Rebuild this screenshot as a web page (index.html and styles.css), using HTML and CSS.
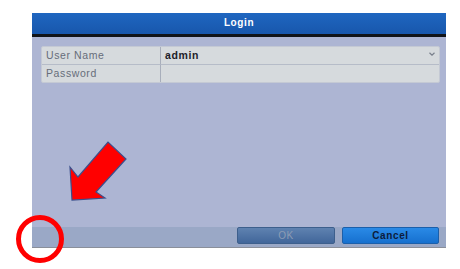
FILE: index.html
```html
<!DOCTYPE html>
<html lang="en">
<head>
    <meta charset="UTF-8">
    <title>Login</title>
    <link rel="stylesheet" href="styles.css">
</head>
<body>
    <div class="dialog">
        <div class="dialog-title">Login</div>
        <div class="dialog-body">
            <div class="login-table">
                <div class="cell label">User Name</div>
                <div class="cell value">admin
                    <svg class="caret" width="6" height="4" viewBox="0 0 6 4">
                        <path d="M0.5 0.8 L3 3.2 L5.5 0.8" fill="none" stroke="#7a808c" stroke-width="1.2"/>
                    </svg>
                </div>
                <div class="cell label">Password</div>
                <div class="cell value"></div>
            </div>
        </div>
        <div class="dialog-footer">
            <button class="btn btn-ok">OK</button>
            <button class="btn btn-cancel">Cancel</button>
        </div>
    </div>

    <!-- annotation overlay -->
    <svg class="annotation" width="460" height="269" viewBox="0 0 460 269">
        <polygon points="72,200 70,167 78,177 108,142 126,159 96,192 105,198"
                 fill="#ff0000" stroke="#3b4f8c" stroke-width="1.2" stroke-linejoin="miter"/>
        <circle cx="40" cy="239" r="21.5" fill="none" stroke="#ff0000" stroke-width="5"/>
    </svg>
</body>
</html>
```

FILE: styles.css
```css
* {
    margin: 0;
    padding: 0;
    box-sizing: border-box;
}

body {
    font-family: 'Liberation Sans', Arial, sans-serif;
    background: #ffffff;
    width: 460px;
    height: 269px;
    overflow: hidden;
    position: relative;
}

/* Dialog */
.dialog {
    margin: 13px 0 0 32px;
    width: 414px;
    height: 235px;
    background: #adb5d3;
    display: flex;
    flex-direction: column;
    border-bottom: 1px solid #8a8f9a;
}

.dialog-title {
    height: 24px;
    background: linear-gradient(#1f66c0, #1857ac);
    border-bottom: 3px solid #111418;
    color: #ffffff;
    font-size: 10px;
    font-weight: bold;
    letter-spacing: 0.6px;
    text-align: center;
    line-height: 20px;
}

.dialog-body {
    flex-grow: 1;
    padding: 9px 6px 0 9px;
}

.login-table {
    display: grid;
    grid-template-columns: 119px 1fr;
    border: 1px solid #c4c9d4;
    border-radius: 2px;
    background: #d6dadd;
}

.cell {
    height: 17.5px;
    font-size: 10.5px;
    line-height: 17px;
    padding-left: 4px;
    letter-spacing: 0.6px;
}

.cell.label {
    color: #666d7a;
    border-right: 1px solid #a8aebb;
}

.cell.value {
    color: #1d2129;
    font-weight: bold;
    display: flex;
    justify-content: space-between;
    align-items: center;
}

.login-table .cell:nth-child(-n+2) {
    border-bottom: 1px solid #b6bcc8;
}

.caret {
    margin-right: 4px;
    margin-bottom: 2px;
}

/* Footer */
.dialog-footer {
    height: 20px;
    background: #9aa8c6;
    display: flex;
    justify-content: flex-end;
    align-items: flex-start;
    gap: 7px;
    padding-right: 7px;
}

.btn {
    height: 17px;
    border: 1px solid #3d5f8c;
    border-radius: 2px;
    font-family: 'Liberation Sans', Arial, sans-serif;
    font-size: 10px;
    font-weight: bold;
    letter-spacing: 0.6px;
}

.btn-ok {
    width: 98px;
    background: linear-gradient(#5f82b0, #41669a);
    color: #8d9cb4;
    font-weight: normal;
}

.btn-cancel {
    width: 97px;
    background: linear-gradient(#2a8ae6, #1670cf);
    border-color: #1b5faa;
    color: #0c1c3c;
}

/* Annotation */
.annotation {
    position: absolute;
    left: 0;
    top: 0;
}
```
